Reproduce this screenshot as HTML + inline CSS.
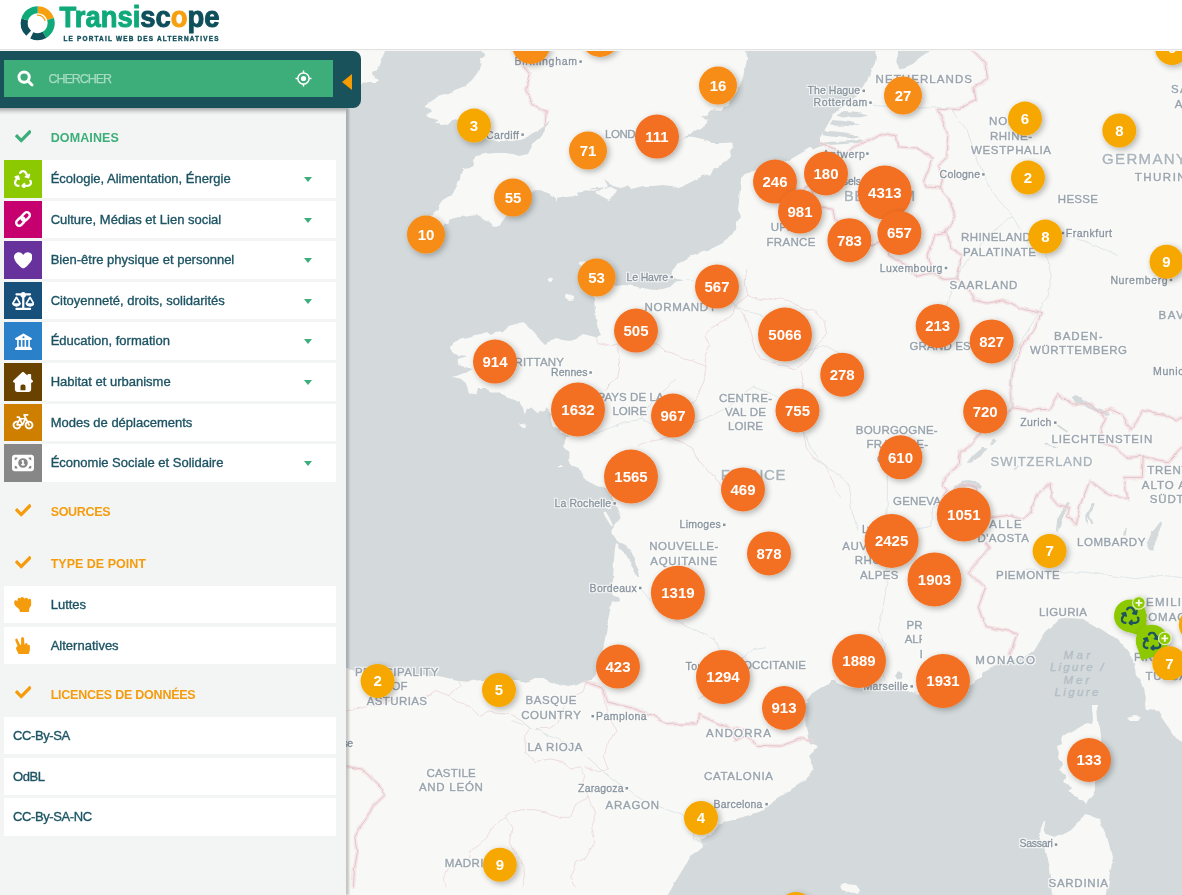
<!DOCTYPE html>
<html lang="fr"><head><meta charset="utf-8"><title>Transiscope - Le portail web des alternatives</title>
<style>
html,body{margin:0;padding:0;width:1182px;height:895px;overflow:hidden;background:#fff;font-family:"Liberation Sans",sans-serif;}
#header{position:absolute;left:0;top:0;width:1182px;height:49px;background:#fff;border-bottom:1px solid #e2e2e2;box-shadow:0 1px 0 #f6f6f5;z-index:5}
#map{position:absolute;left:0;top:50px;width:1182px;height:845px;background:#d4dadc;overflow:hidden}
#map svg{position:absolute;left:0;top:-50px}
#sidebar{position:absolute;left:0;top:50px;width:346px;height:845px;background:#f3f5f5;box-shadow:3px 0 2px rgba(0,0,0,.2);z-index:3}
#search{position:absolute;left:0;top:51px;width:361px;height:57px;background:#19525b;border-radius:0 8px 8px 0;z-index:4}
#search .inp{position:absolute;left:4px;top:9px;width:329px;height:37px;background:#3dae7a}
#search .ph{position:absolute;left:48.5px;top:20.6px;font-size:12.5px;line-height:14px;color:#a7dcc2;letter-spacing:-1.05px;-webkit-text-stroke:.25px #a7dcc2;white-space:nowrap;transform-origin:0 0}
#search .tri{position:absolute;left:342px;top:23px;width:0;height:0;border-right:10px solid #f59c00;border-top:8.3px solid transparent;border-bottom:8.3px solid transparent}
.ic{position:absolute;display:block}
.hd{position:absolute;left:0;width:346px;height:52px}
.hd .t{position:absolute;left:50.7px;top:23.8px;font-size:12.5px;line-height:13px;font-weight:bold;white-space:nowrap}
.it{position:absolute;left:4px;width:332px;height:37.5px;background:#fff}
.it .b{position:absolute;left:0;top:0;width:38px;height:37.5px}
.it .t{position:absolute;left:46.7px;top:11px;font-size:13px;line-height:15px;color:#1d5464;white-space:nowrap;-webkit-text-stroke:.35px #1d5464}
.it .c{position:absolute;left:300.4px;top:17px;width:0;height:0;border-top:5.2px solid #3dae7a;border-left:4.9px solid transparent;border-right:4.9px solid transparent}
.land{fill:#f8f8f6}
.sea{fill:#d4dadc}
.cl text{font-family:"Liberation Sans",sans-serif;font-weight:bold;font-size:15px;fill:#fff;text-anchor:middle}
.lb text{font-family:"Liberation Sans",sans-serif;stroke-width:.45px}
.lb .r{fill:#97a3ad;stroke:#97a3ad}
.lb .c{fill:#a9b4bc;stroke:#a9b4bc}
.lb .t{fill:#84929e;stroke:#84929e;stroke-width:.38px}
.lb .s{fill:#b3bdc5;stroke:#b3bdc5;stroke-width:.3px;font-style:italic}
#sidebar .topsh{position:absolute;left:0;top:58px;width:346px;height:7px;background:linear-gradient(rgba(0,0,0,.3),rgba(0,0,0,.08) 60%,rgba(0,0,0,0))}

</style></head>
<body>
<div id="map"><svg width="1182" height="895" viewBox="0 0 1182 895"><defs><filter id="sh" x="-30%" y="-30%" width="170%" height="170%"><feGaussianBlur in="SourceAlpha" stdDeviation="3.4"/><feOffset dx="1.5" dy="2"/><feComponentTransfer><feFuncA type="linear" slope=".3"/></feComponentTransfer><feMerge><feMergeNode/><feMergeNode in="SourceGraphic"/></feMerge></filter><filter id="halo" x="-5%" y="-5%" width="110%" height="110%"><feMorphology in="SourceAlpha" operator="dilate" radius="1.1" result="d"/><feGaussianBlur in="d" stdDeviation=".5" result="b"/><feFlood flood-color="#fbfbfa" flood-opacity=".9"/><feComposite in2="b" operator="in"/><feMerge><feMergeNode/><feMergeNode in="SourceGraphic"/></feMerge></filter><filter id="wig" x="0" y="0" width="100%" height="100%" filterUnits="userSpaceOnUse"><feTurbulence type="fractalNoise" baseFrequency="0.09" numOctaves="2" seed="3" result="n"/><feDisplacementMap in="SourceGraphic" in2="n" scale="4" xChannelSelector="R" yChannelSelector="G"/></filter><clipPath id="ck"><rect x="880" y="610" width="41.9" height="60"/></clipPath></defs><rect x="0" y="0" width="1182" height="895" class="sea"/><g filter="url(#wig)"><path class="land" d="M340 44 L385 44 L385 50 L380 62 L377 70 L373 72 L375 78 L379 80 L377 83 L367 83 L362 84 L340 86 Z"/><path class="land" d="M480.6 44 L480.6 50 L485 56 L480 59 L480.6 64 L478 72 L472 80 L465 86 L455 90 L447 94.4 L439 96.4 L435 99 L427 103.6 L424.6 107 L430 108.4 L432 111 L427 116 L431 118 L435 119 L439 120.4 L435 122.4 L441 125 L447 124.4 L453 119 L459 120 L467 130 L479 138 L487 138 L499 141 L513 141 L523 138 L531 134 L539 130 L547 124 L551 120 L549 124 L544 132 L539 138 L532 144 L530 150 L528 154 L519 156 L513 154 L505 153 L495 153 L485 154 L477 156 L474 159 L475 164 L471 168 L463 169 L460.6 174 L460 180 L459.2 180 L455.8 188.5 L450.8 195.2 L442.3 200.3 L438.9 205.4 L437.2 210.5 L433 214.7 L425.4 222.3 L418.6 229.1 L410.2 234.1 L407.6 238.4 L413.5 242.6 L422 239.2 L427.1 240.9 L430.5 245.1 L438.9 242.6 L442.3 235.8 L444.8 224.8 L449.1 224.8 L450.8 218.9 L457.5 217.2 L466 216.4 L472.8 215.5 L476.1 213.8 L479.5 216.4 L484.6 220.6 L491.4 222.3 L493.1 225.7 L499.8 225.7 L501.5 222.3 L504.9 218.1 L510 212.1 L515.1 205.4 L518.4 200.3 L525.2 193.5 L532 190.2 L540.4 190.2 L548.9 193.5 L555.7 197.8 L556.5 202.8 L558.2 197.8 L565.8 196.1 L572.6 195.2 L577.7 196.1 L576 191.8 L586.1 190.2 L594.6 191.8 L600 190.2 L583 190 L589 190 L593 188 L599 188 L607 186 L603 179 L607 182 L613 186 L621 188 L627 186 L631 189 L635 188 L643 186 L653 186 L663 185 L671 186 L679 188 L687 184 L695 180 L703 176 L711 174 L714 168 L719 166 L727 162 L731 156 L730 150 L733 146 L732 142.4 L723 143 L710 143 L703 140 L695 138 L683 137.4 L691 134 L695 131 L703 126 L707 123 L709 119 L701 117 L707 114 L711 110 L721 111 L725 107 L727 106 L738 90 L742 80 L745 70 L747 58 L746 50 L746 44 Z"/><path class="land" d="M596 193 L603 188 L611 187 L618 190 L616 194 L609 200 L603 197 Z"/><path class="land" d="M877 44 L877 50 L875 62 L871 72 L867 80 L862 88 L857 96 L851 100 L845 105 L839 110 L833 116 L828 123 L824 130 L821 136 L819 139 L819 144 L813 146 L803 152 L793 158 L783 162 L771 166 L757 170 L745 174 L741 178 L740 190 L739 202 L738 210 L741 216 L737 222 L736 229 L735 229 L732 235 L723 243 L713 248 L703 251 L693 255 L683 260 L677 264 L673 271 L672 277 L677 279 L683 280.6 L675 281.4 L669 287 L663 289 L653 290 L643 288 L633 286 L623 285 L616 286 L612 282 L611 272 L609.5 265.5 L604 264 L596 265 L588 263.5 L581 261.5 L578.5 263 L582 269 L587 278 L591 287 L593.5 295 L595 309 L596 319 L598 329 L601 335 L595 337 L583 334 L577 338 L571 341 L563 340 L557 338 L551 341 L545 345 L540 340 L535 333 L529 327 L525 322 L519 323 L513 325 L507 327 L503 331 L495 332 L491 335 L487 332 L481 334 L475 335 L467 337 L459 339 L453 343 L450 347 L451 353 L459 355 L467 356 L459 359 L458 365 L465 367 L473 369 L463 373 L453 377 L459.8 378.7 L466.6 384.8 L469 392.4 L476.5 393.2 L478 387.9 L485.7 387.9 L490.3 392.4 L497.9 392.4 L504 395.5 L511.6 399.3 L519.2 402.3 L523 407.7 L524.5 414.5 L526.8 407.7 L531.4 407.7 L537.5 413 L545 410.7 L546.6 406.1 L549.6 410.7 L552.7 415.3 L551 421 L553 427 L560 428 L570 428.5 L560 432 L566 435 L571 436.6 L566.4 438.1 L563.3 447.3 L569.4 451.8 L569.4 459.4 L572.5 466 L579 468 L583 476 L589 482 L597 486 L605 488 L609 492 L615 503 L617.5 507.4 L620.2 514.1 L621.6 518.8 L618.9 520.8 L616.2 523.5 L613.8 526.9 L611.5 530.2 L611.5 532.9 L614.2 536.2 L616.9 539.6 L619.5 542 L625.6 545 L630.9 550.3 L633.6 557 L636.3 565.1 L639 573.1 L640.3 577.1 L639 577.1 L635 573.1 L632.3 567.7 L629.6 561 L625.6 554.3 L620.2 549 L617.5 543.6 L615.9 543.6 L614.9 549 L614.2 557 L613.5 570.4 L612.8 583.8 L612.2 594.6 L614.2 595.9 L618.9 597.2 L620.2 599.9 L616.2 601.9 L612.2 601.3 L611.1 604 L610.2 610 L608 620 L605 640 L602 654 L599 666 L595 676 L591 680 L583 682 L577 685 L567 687 L559 685 L551 682 L543 678 L535 678 L527 682 L517 680 L483 680 L471 681 L459 680 L447 678 L439 676 L427 675 L407 675 L395 674 L357 671 L347 669 L340 668 L340 900 L667 900 L668 895 L674 884 L680 874 L686 864 L690 856 L696 852 L703 846 L700 840 L706 837 L714 832 L718 825 L726 822 L736 819 L746 816 L756 813 L764 810 L769 805 L774 800 L782 795 L790 790 L798 785 L804 781 L809 776 L813 770 L812 762 L809 756 L813 752 L817 747 L810 744 L809 736 L807 728 L806 716 L805 720 L806 710 L808 700 L814 692 L822 687 L828 684 L832 680 L840 684 L848 687 L856 688 L866 689 L884 690 L900 689 L910 691 L916 694 L924 698 L936 698 L946 700 L956 696 L968 692 L970 686 L976 680 L982 677 L984 672 L990 669 L998 664 L1012 660 L1026 656 L1034 650 L1040 640 L1044 633 L1052 625 L1060 620 L1070 618 L1082 619 L1086 621 L1094 625 L1104 631 L1114 638 L1122 644 L1127 649 L1131 656 L1134 664 L1136 674 L1141 680 L1144 688 L1146 698 L1145 704 L1146 710 L1152 708 L1158 712 L1162 718 L1166 724 L1172 732 L1176 738 L1182 742 L1190 744 L1190 44 Z"/><path class="land" d="M1092 705 L1092 708 L1093 720 L1092 724 L1086 723 L1080 726 L1074 730 L1066 734 L1061 738 L1062 744 L1057 746 L1059 752 L1058 758 L1062 762 L1063 766 L1059 770 L1066 774 L1066 778 L1064 782 L1070 785 L1072 788 L1068 792 L1074 795 L1078 798 L1084 801 L1086 804 L1088 800 L1092 796 L1095 790 L1095 784 L1096 780 L1101 766 L1101.6 752 L1101 736 L1100 728 L1098 722 L1098 720 L1097 708 L1097 705 Z"/><path class="land" d="M1086 814 L1084 818 L1078 822 L1074 826 L1068 832 L1060 836 L1052 837 L1046 835 L1043.6 830 L1045 824 L1045.2 821 L1043.6 821.6 L1041 828 L1040 834 L1042 840 L1044 846 L1046 852 L1048 860 L1050 868 L1051 876 L1052 886 L1054 900 L1106 900 L1108 888 L1109 880 L1110 872 L1112 864 L1113 856 L1110 848 L1108 840 L1106 832 L1102 827 L1100 820 L1094 816 Z"/><path class="land" d="M1127 718 L1134 716 L1141 717 L1138 721 L1130 721 Z"/><path class="land" d="M547 280 L550 277.5 L553 278.5 L552 281.5 L548 282 Z"/><path class="land" d="M565 294.5 L570 293.5 L575 295 L574.5 299.5 L569 300 L565.5 298 Z"/><path class="land" d="M519 423.5 L523 423 L527 426 L526 428.5 L522 427.5 Z"/><path class="land" d="M558 466 L561 466 L562.5 468 L559 468 Z"/><path class="land" d="M603.5 511.4 L606.1 512.1 L608.8 516.8 L612.2 523.5 L612.8 526.5 L610.8 525.5 L607.5 520.2 L604.1 514.8 Z"/><path class="land" d="M601 505.5 L606 505 L612 508 L607 508.5 Z"/><path class="land" d="M563 445 L566 445 L568 450 L566 450 Z"/><path class="land" d="M840 886 L846 884 L856 885 L860 890 L858 895 L848 892 L842 890 Z"/><path class="sea" d="M897.5 44 L896.4 62.2 L899.5 69.3 L905.6 68.3 L913.7 62.2 L921.8 56.1 L930 52 L932 44 Z"/><path class="sea" d="M843.7 110.9 L852.8 111.5 L860.9 112.5 L868 114.6 L860.9 116.2 L851.8 116.2 L843.7 117.4 L837.6 115.4 Z"/><path class="sea" d="M832.5 120.1 L843.7 121.1 L852.8 122.7 L859.9 124.7 L852.8 126.5 L843.7 125.7 L835.5 125.7 L830.1 124.1 Z"/><path class="sea" d="M822.7 130.2 L832.5 131.2 L843.7 132.2 L852.8 134.3 L859.9 137.3 L850.8 138.7 L840.6 137.3 L830.5 136.5 L822.7 135.3 Z"/><path class="sea" d="M808.1 145.4 L820.3 143 L832.5 141.8 L843.7 141.4 L852.8 141 L860.9 139.3 L863.4 141.2 L854.8 143.2 L843.7 144 L832.5 144.8 L820.3 146.6 L812.2 149.5 Z"/><path class="sea" d="M946.6 499.9 L949.7 492.6 L955.7 486 L962.5 480.7 L969.3 480.1 L978.4 482.7 L982.1 486 L980.7 488.7 L976.1 488 L967 486.7 L960.2 487.3 L954.7 492 L951.1 495.9 L947.5 501.2 Z"/><path class="sea" d="M967.9 462.2 L973.9 454.9 L983 446.9 L987.5 447.5 L980.7 456.2 L972.5 461.5 Z"/><path class="sea" d="M989.8 444.2 L994.3 439.5 L996.6 440.8 L992.1 445.5 Z"/><path class="sea" d="M1071.7 398.5 L1076.3 395.1 L1085.4 400.5 L1096.7 407.3 L1108.1 412 L1110.4 414 L1103.6 415.3 L1094.5 411.3 L1083.1 404.6 L1076.3 403.2 Z"/><path class="sea" d="M1055.8 531.9 L1057.1 520.2 L1060.3 513.6 L1067.2 503.1 L1069.9 503.8 L1063.5 515 L1059.9 526.7 Z"/><path class="sea" d="M1087.2 525.4 L1086.3 515 L1092.6 503.8 L1095.4 503.8 L1089.9 515.6 L1093.6 523.5 L1091.3 524.1 L1088.5 516.9 Z"/><path class="sea" d="M1150.4 549.5 L1146.8 543 L1151.4 533.2 L1160.5 521.5 L1162.3 523.5 L1155.4 539.8 L1154.5 549.5 Z"/><path class="sea" d="M1055.3 423.4 L1059 427.4 L1067.2 432.8 L1068.1 431.5 L1060.3 426.1 L1056.2 422.1 Z"/><path class="sea" d="M1044.4 444.2 L1051.2 447.5 L1058.1 448.9 L1058.1 447.5 L1051.2 445.5 L1045.3 442.8 Z"/><path class="sea" d="M1123.1 534.5 L1124.5 528 L1125.9 528 L1125 534.5 Z"/><path class="sea" d="M894.2 675.8 L897.9 670.7 L903.3 673.9 L901.5 678.9 L896.5 679.5 Z"/><path class="sea" d="M1013.5 468.8 L1018 466.2 L1018.9 467.5 L1014.4 470.1 Z"/><g fill="none" stroke-linejoin="round" stroke-linecap="round"><path d="M782.7 163.3 L785.0 180.7 L798.6 191.5 L810.0 185.0 L816.8 205.8 L832.8 209.4 L835.1 220.1 L855.5 221.5 L857.8 244.2 L869.2 245.6 L880.6 241.4 L886.5 230.0 L888.8 255.5 L907.9 266.1 L915.6 276.6 L931.5 273.1 M931.5 273.1 L928.3 255.5 L935.2 234.3 L945.6 232.2 M945.6 232.2 L951.1 248.5 L962.5 255.5 L956.6 278.7 M931.5 273.1 L944.3 279.4 L956.6 278.7 M956.6 278.7 L967.0 287.1 L973.9 299.7 L987.5 303.1 L1003.4 299.7 L1019.4 308.0 L1041.2 313.5 L1035.3 328.8 L1021.6 346.0 L1012.5 373.3 L1010.3 393.7 L1012.1 407.9 M945.6 232.2 L955.7 216.5 L948.8 198.6 L940.6 187.9 M820.0 143.0 L844.2 154.6 L860.1 143.0 L873.7 138.6 L882.8 133.5 L896.5 135.7 L898.8 148.1 L917.0 148.8 L932.9 158.2 L923.8 180.7 L926.1 187.1 L940.6 187.9 M940.6 187.9 L943.4 175.6 L937.5 166.2 L946.6 157.5 L948.8 137.1 L938.4 109.3 L957.9 109.3 L976.1 100.4 L973.9 87.8 L987.5 78.9 L985.2 63.3 L972.5 49.8 L973.9 44.6 M1012.1 407.9 L1003.4 418.0 L991.2 414.0 L983.0 417.4 L985.2 427.4 L971.6 444.2 L960.2 452.2 L959.3 463.5 L945.6 477.4 L942.9 486.0 L946.6 489.3 L937.9 505.1 L945.6 504.5 L953.4 497.2 L950.6 493.9 L962.5 484.0 L976.1 486.0 L978.4 505.1 L987.1 518.2 M987.1 518.2 L1010.3 515.0 L1023.9 518.9 L1030.7 512.3 L1037.6 493.9 L1050.3 483.4 L1051.2 497.2 L1058.1 505.8 L1069.4 508.4 L1067.2 515.0 L1076.3 524.8 L1079.9 505.8 L1089.9 480.7 L1108.1 493.9 L1127.7 498.5 L1124.0 477.4 L1142.3 477.4 L1143.2 456.2 M1143.2 456.2 L1126.3 457.5 L1116.3 447.5 L1103.6 443.5 L1100.4 429.5 L1105.8 417.4 L1101.7 414.0 M1101.7 414.0 L1089.9 403.9 L1071.7 403.9 L1058.1 393.7 L1049.0 409.3 L1030.7 410.0 L1012.1 407.9 M1101.7 414.0 L1110.4 409.3 L1121.8 415.3 L1130.9 429.5 L1142.3 410.6 L1162.7 414.0 L1176.4 420.7 L1194.6 408.6 M1143.2 456.2 L1155.9 460.8 L1167.3 462.8 L1180.9 448.9 L1194.6 449.5 M987.1 518.2 L977.0 525.4 L989.8 548.2 L968.4 572.1 L985.2 588.2 L978.4 607.4 L985.2 626.5 L1017.1 632.9 L1009.4 656.3 M585.2 682.0 L602.9 688.3 L607.5 702.0 L632.5 708.2 L653.0 715.7 L666.7 724.4 L697.2 723.8 L698.5 714.5 L732.2 729.9 M732.2 729.9 L734.9 740.4 L744.9 736.1 L747.7 731.8 L737.2 726.8 L732.2 729.9 M744.9 736.1 L757.7 745.4 L780.4 746.0 L803.2 738.0 L810.9 740.4 M527.9 40.8 L524.7 53.6 L530.1 59.6 L521.0 63.3 L530.1 74.5 L525.6 89.3 L532.4 104.1 L546.1 111.5 L545.6 124.7 M347.0 766.6 L362.2 769.1 L372.4 779.3 L382.5 789.4 L385.1 794.5 L372.4 807.2 L367.3 817.4 L359.7 827.5 L354.6 837.7 L357.2 852.9 L354.6 868.1 L353.3 886.9" stroke="#f0d9dc" stroke-width="4" opacity=".55"/><path d="M782.7 163.3 L785.0 180.7 L798.6 191.5 L810.0 185.0 L816.8 205.8 L832.8 209.4 L835.1 220.1 L855.5 221.5 L857.8 244.2 L869.2 245.6 L880.6 241.4 L886.5 230.0 L888.8 255.5 L907.9 266.1 L915.6 276.6 L931.5 273.1 M931.5 273.1 L928.3 255.5 L935.2 234.3 L945.6 232.2 M945.6 232.2 L951.1 248.5 L962.5 255.5 L956.6 278.7 M931.5 273.1 L944.3 279.4 L956.6 278.7 M956.6 278.7 L967.0 287.1 L973.9 299.7 L987.5 303.1 L1003.4 299.7 L1019.4 308.0 L1041.2 313.5 L1035.3 328.8 L1021.6 346.0 L1012.5 373.3 L1010.3 393.7 L1012.1 407.9 M945.6 232.2 L955.7 216.5 L948.8 198.6 L940.6 187.9 M820.0 143.0 L844.2 154.6 L860.1 143.0 L873.7 138.6 L882.8 133.5 L896.5 135.7 L898.8 148.1 L917.0 148.8 L932.9 158.2 L923.8 180.7 L926.1 187.1 L940.6 187.9 M940.6 187.9 L943.4 175.6 L937.5 166.2 L946.6 157.5 L948.8 137.1 L938.4 109.3 L957.9 109.3 L976.1 100.4 L973.9 87.8 L987.5 78.9 L985.2 63.3 L972.5 49.8 L973.9 44.6 M1012.1 407.9 L1003.4 418.0 L991.2 414.0 L983.0 417.4 L985.2 427.4 L971.6 444.2 L960.2 452.2 L959.3 463.5 L945.6 477.4 L942.9 486.0 L946.6 489.3 L937.9 505.1 L945.6 504.5 L953.4 497.2 L950.6 493.9 L962.5 484.0 L976.1 486.0 L978.4 505.1 L987.1 518.2 M987.1 518.2 L1010.3 515.0 L1023.9 518.9 L1030.7 512.3 L1037.6 493.9 L1050.3 483.4 L1051.2 497.2 L1058.1 505.8 L1069.4 508.4 L1067.2 515.0 L1076.3 524.8 L1079.9 505.8 L1089.9 480.7 L1108.1 493.9 L1127.7 498.5 L1124.0 477.4 L1142.3 477.4 L1143.2 456.2 M1143.2 456.2 L1126.3 457.5 L1116.3 447.5 L1103.6 443.5 L1100.4 429.5 L1105.8 417.4 L1101.7 414.0 M1101.7 414.0 L1089.9 403.9 L1071.7 403.9 L1058.1 393.7 L1049.0 409.3 L1030.7 410.0 L1012.1 407.9 M1101.7 414.0 L1110.4 409.3 L1121.8 415.3 L1130.9 429.5 L1142.3 410.6 L1162.7 414.0 L1176.4 420.7 L1194.6 408.6 M1143.2 456.2 L1155.9 460.8 L1167.3 462.8 L1180.9 448.9 L1194.6 449.5 M987.1 518.2 L977.0 525.4 L989.8 548.2 L968.4 572.1 L985.2 588.2 L978.4 607.4 L985.2 626.5 L1017.1 632.9 L1009.4 656.3 M585.2 682.0 L602.9 688.3 L607.5 702.0 L632.5 708.2 L653.0 715.7 L666.7 724.4 L697.2 723.8 L698.5 714.5 L732.2 729.9 M732.2 729.9 L734.9 740.4 L744.9 736.1 L747.7 731.8 L737.2 726.8 L732.2 729.9 M744.9 736.1 L757.7 745.4 L780.4 746.0 L803.2 738.0 L810.9 740.4 M527.9 40.8 L524.7 53.6 L530.1 59.6 L521.0 63.3 L530.1 74.5 L525.6 89.3 L532.4 104.1 L546.1 111.5 L545.6 124.7 M347.0 766.6 L362.2 769.1 L372.4 779.3 L382.5 789.4 L385.1 794.5 L372.4 807.2 L367.3 817.4 L359.7 827.5 L354.6 837.7 L357.2 852.9 L354.6 868.1 L353.3 886.9" stroke="#e3c0c7" stroke-width="1" opacity=".9"/><path d="M347.0 710.8 L352.1 709.5 L372.4 705.7 L397.8 698.1 L423.1 698.1 L435.8 690.5 L448.5 695.5 L461.2 685.4 L458.7 680.3 M448.5 695.5 L458.7 703.1 L471.4 708.2 L479.0 715.8 L489.1 710.8 L496.7 713.3 L509.4 714.6 L522.1 720.9 L529.7 728.5 L524.7 736.1 L525.9 753.9 L534.8 761.5 L550.0 759.0 L562.7 761.5 L570.4 769.1 L580.5 766.6 L585.6 776.8 L583.0 786.9 L588.1 797.1 L575.4 804.7 L570.4 817.4 L557.7 817.4 L547.5 812.3 L534.8 809.7 L522.1 809.7 L512.0 812.3 L504.4 817.4 L491.7 827.5 L486.6 837.7 L479.0 845.3 L471.4 850.4 L468.8 860.5 L458.7 863.0 L448.5 868.1 L443.4 878.3 L446.0 886.9 M504.4 817.4 L512.0 827.5 L509.4 842.7 L514.5 852.9 L522.1 860.5 L524.7 873.2 L522.1 886.9 M585.6 682.8 L583.0 693.0 L570.4 698.1 L562.7 710.8 L557.7 723.5 L550.0 728.5 L539.9 728.5 L529.7 728.5 M603.3 698.1 L608.4 715.8 L616.0 731.1 L605.9 743.8 L603.3 756.4 L608.4 769.1 L598.3 771.7 L585.6 766.6 M588.1 797.1 L595.7 812.3 L590.7 827.5 L594.5 842.7 L585.6 858.0 L575.4 863.0 L570.4 875.7 L575.4 886.9 M595.5 336.0 L598.1 343.6 L610.8 346.1 L617.1 343.6 L618.4 353.8 L619.6 366.4 L617.1 379.1 L610.8 384.2 L605.7 389.3 M617.1 344.9 L636.1 346.1 L657.7 343.6 L664.1 351.2 L674.2 353.8 L684.4 358.8 L694.5 361.4 L704.7 366.4 L705.9 376.6 L700.9 386.8 L697.1 396.9 L692.0 402.0 L686.9 412.1 M746.5 270.0 L745.3 282.7 L747.8 295.4 L735.1 305.5 L732.6 315.7 L722.4 320.8 L709.7 328.4 L704.7 336.0 L709.7 346.1 L705.9 356.3 L704.7 366.4 M735.1 305.5 L742.7 313.1 L750.4 333.5 L755.4 351.2 L760.5 358.8 L778.3 363.9 L796.0 369.0 L808.7 358.8 L816.3 346.1 L826.5 333.5 L824.0 320.8 L813.8 310.6 L803.7 308.1 L788.4 300.5 L773.2 297.9 L760.5 300.5 L747.8 295.4 M671.7 437.5 L681.8 442.6 L692.0 447.7 L697.1 457.8 L707.2 470.5 L714.8 475.6 L722.4 488.3 L732.6 496.9 M801.1 371.5 L803.7 384.2 L801.1 402.0 L803.7 432.4 L806.2 447.7 L813.8 457.8 L824.0 462.9 L829.0 473.0 L834.1 485.7 L839.2 496.9 M638.7 445.1 L651.4 440.1 L666.6 437.5 L671.7 437.5" stroke="#ecd9dc" stroke-width=".9"/><path d="M566.5 428.8 L596.1 433.5 L623.4 422.1 L641.6 419.4 L663.0 430.1 L678.0 427.4 L698.1 421.4 L727.2 407.9 L753.1 386.9 L771.3 393.7 L786.4 401.2 L800.9 424.1 L810.5 448.2 L823.7 464.2 L847.8 482.1 L851.9 511.0 L857.8 530.0 M687.1 279.4 L703.1 283.6 L716.7 280.8 L723.5 294.1 L734.9 304.5 L746.3 311.5 L762.2 314.9 L773.6 321.2 L780.4 332.2 L787.7 343.2 L803.2 351.5 L825.9 346.0 L851.9 359.7 M640.7 588.9 L655.3 605.5 L675.8 620.2 L694.9 629.7 L714.4 639.2 L725.8 655.0 L732.2 667.6 L721.3 686.4 L698.5 698.9 M946.6 500.5 L932.9 507.1 L930.6 526.7 L912.4 530.0 L898.8 526.7 L886.5 529.3 L885.1 552.7 L887.4 578.6 L882.8 610.6 L878.3 629.7 L885.1 645.5 L877.4 662.6 L885.1 677.0 L887.4 683.3 M1012.1 407.9 L1010.3 386.9 L1012.5 359.7 L1021.6 340.5 L1035.3 318.4 L1046.7 297.6 L1051.2 276.6 L1046.7 255.5 L1043.0 241.4 L1026.2 241.4 L1012.5 215.8 L994.3 195.1 L983.4 174.2 L974.8 153.2 L967.0 129.8 L948.8 107.8 L935.2 107.8 L907.9 107.8 L876.0 105.6 L855.5 100.4 M511.9 720.7 L534.7 728.7 L555.2 738.6 L577.9 748.4 L593.8 763.8 L612.0 779.1 L626.2 788.2 L643.9 800.4 L666.7 809.5 L682.6 815.5 L691.7 830.6 L694.0 839.7 L706.3 844.5 M1016.2 574.1 L1030.7 568.9 L1058.1 572.1 L1085.4 572.1 L1108.1 575.4 L1135.4 578.6 L1162.7 575.4 L1190.0 578.6 M886.5 529.3 L887.4 493.9 L887.4 460.8 L898.8 447.5 L912.4 434.2 L926.1 427.4 M732.2 667.6 L753.1 648.7 L764.5 646.8 M641.6 419.4 L653.0 400.5 L675.8 380.2 M1043.0 241.4 L1062.6 234.3 L1085.4 241.4 L1117.2 255.5 M1012.5 215.8 L989.8 234.3 L969.3 259.0 L955.7 276.6 L946.6 304.5 L944.3 332.2" stroke="#dde4e8" stroke-width=".9"/></g></g><g class="lb"><text class="s" x="1063.5" y="659" font-size="11.5" textLength="26.5" lengthAdjust="spacing">Mar</text><text class="s" x="1050" y="671.4" font-size="11.5" textLength="53.4" lengthAdjust="spacing">Ligure /</text><text class="s" x="1063.5" y="684" font-size="11.5" textLength="25.5" lengthAdjust="spacing">Mer</text><text class="s" x="1054.5" y="696.4" font-size="11.5" textLength="43.9" lengthAdjust="spacing">Ligure</text></g><g class="lb" filter="url(#halo)"><text class="t" x="514.6" y="65.4" font-size="10.5" textLength="62.4" lengthAdjust="spacing">Birmingham</text><text class="t" x="486" y="138.6" font-size="10.5" textLength="33.0" lengthAdjust="spacing">Cardiff</text><text class="r" x="605" y="137.6" font-size="11.5" textLength="47.0" lengthAdjust="spacing">LONDON</text><text class="t" x="807.5" y="94.3" font-size="10.5" textLength="52.5" lengthAdjust="spacing">The Hague</text><text class="t" x="813.6" y="106" font-size="10.5" textLength="53.7" lengthAdjust="spacing">Rotterdam</text><text class="r" x="875.6" y="83" font-size="11.5" textLength="96.4" lengthAdjust="spacing">NETHERLANDS</text><text class="t" x="822.6" y="158" font-size="10.5" textLength="42.2" lengthAdjust="spacing">Antwerp</text><text class="t" x="822" y="184.5" font-size="10.5" textLength="39.0" lengthAdjust="spacing">Brussels</text><text class="c" x="844" y="201" font-size="14.5" textLength="71.0" lengthAdjust="spacing">BELGIUM</text><text class="t" x="939.6" y="178" font-size="10.5" textLength="40.4" lengthAdjust="spacing">Cologne</text><text class="r" x="989" y="125" font-size="11.5" textLength="44.0" lengthAdjust="spacing">NORTH</text><text class="r" x="990" y="140" font-size="11.5" textLength="42.0" lengthAdjust="spacing">RHINE-</text><text class="r" x="971" y="154.4" font-size="11.5" textLength="80.0" lengthAdjust="spacing">WESTPHALIA</text><text class="c" x="1102" y="164.4" font-size="15" textLength="84.0" lengthAdjust="spacing">GERMANY</text><text class="r" x="1134.7" y="181.2" font-size="11.5" textLength="75.3" lengthAdjust="spacing">THURINGIA</text><text class="r" x="1057.8" y="202.7" font-size="11.5" textLength="40.1" lengthAdjust="spacing">HESSE</text><text class="t" x="1065.7" y="236.6" font-size="10.5" textLength="46.3" lengthAdjust="spacing">Frankfurt</text><text class="r" x="961" y="241.3" font-size="11.5" textLength="74.0" lengthAdjust="spacing">RHINELAND-</text><text class="r" x="963" y="256.3" font-size="11.5" textLength="73.0" lengthAdjust="spacing">PALATINATE</text><text class="t" x="879.8" y="272.4" font-size="10.5" textLength="62.5" lengthAdjust="spacing">Luxembourg</text><text class="r" x="949.5" y="289.2" font-size="11.5" textLength="67.9" lengthAdjust="spacing">SAARLAND</text><text class="t" x="1110.4" y="283.8" font-size="10.5" textLength="57.2" lengthAdjust="spacing">Nuremberg</text><text class="r" x="1158.6" y="318.9" font-size="11.5" textLength="57.4" lengthAdjust="spacing">BAVARIA</text><text class="r" x="1054" y="339.6" font-size="11.5" textLength="48.5" lengthAdjust="spacing">BADEN-</text><text class="r" x="1030" y="354" font-size="11.5" textLength="97.0" lengthAdjust="spacing">WÜRTTEMBERG</text><text class="r" x="909.4" y="350.3" font-size="11.5" textLength="68.6" lengthAdjust="spacing">GRAND EST</text><text class="r" x="770.7" y="230.6" font-size="11.5" textLength="40.3" lengthAdjust="spacing">UPPER</text><text class="r" x="766.4" y="245.6" font-size="11.5" textLength="49.0" lengthAdjust="spacing">FRANCE</text><text class="r" x="1171" y="93" font-size="11.5" textLength="59.0" lengthAdjust="spacing">SAXONY-</text><text class="r" x="1174.7" y="107.8" font-size="11.5" textLength="47.3" lengthAdjust="spacing">ANHALT</text><text class="t" x="1153" y="374.7" font-size="10.5" textLength="37.0" lengthAdjust="spacing">Munich</text><text class="r" x="644.6" y="311.2" font-size="11.5" textLength="71.9" lengthAdjust="spacing">NORMANDY</text><text class="t" x="626.6" y="280.6" font-size="10.5" textLength="41.4" lengthAdjust="spacing">Le Havre</text><text class="r" x="506.5" y="366" font-size="11.5" textLength="57.5" lengthAdjust="spacing">BRITTANY</text><text class="t" x="551" y="375.8" font-size="10.5" textLength="36.4" lengthAdjust="spacing">Rennes</text><text class="r" x="597.5" y="400.8" font-size="11.5" textLength="66.1" lengthAdjust="spacing">PAYS DE LA</text><text class="r" x="612.4" y="415" font-size="11.5" textLength="34.4" lengthAdjust="spacing">LOIRE</text><text class="r" x="719" y="401.5" font-size="11.5" textLength="53.0" lengthAdjust="spacing">CENTRE-</text><text class="r" x="725" y="416" font-size="11.5" textLength="41.0" lengthAdjust="spacing">VAL DE</text><text class="r" x="728" y="430.4" font-size="11.5" textLength="35.0" lengthAdjust="spacing">LOIRE</text><text class="c" x="720.8" y="480" font-size="15" textLength="64.7" lengthAdjust="spacing">FRANCE</text><text class="t" x="554.5" y="507" font-size="10.5" textLength="56.5" lengthAdjust="spacing">La Rochelle</text><text class="t" x="679.6" y="528.4" font-size="10.5" textLength="41.2" lengthAdjust="spacing">Limoges</text><text class="r" x="649.3" y="550.2" font-size="11.5" textLength="69.0" lengthAdjust="spacing">NOUVELLE-</text><text class="r" x="650.3" y="564.5" font-size="11.5" textLength="66.9" lengthAdjust="spacing">AQUITAINE</text><text class="t" x="589.6" y="592.4" font-size="10.5" textLength="47.1" lengthAdjust="spacing">Bordeaux</text><text class="r" x="855.8" y="434" font-size="11.5" textLength="81.9" lengthAdjust="spacing">BOURGOGNE-</text><text class="r" x="866.5" y="448.3" font-size="11.5" textLength="61.5" lengthAdjust="spacing">FRANCHE-</text><text class="r" x="877" y="462.6" font-size="11.5" textLength="41.0" lengthAdjust="spacing">COMTÉ</text><text class="t" x="1020.3" y="425.8" font-size="10.5" textLength="31.1" lengthAdjust="spacing">Zurich</text><text class="r" x="1051.4" y="442.6" font-size="11.5" textLength="100.8" lengthAdjust="spacing">LIECHTENSTEIN</text><text class="c" x="990.6" y="465.8" font-size="13" textLength="101.9" lengthAdjust="spacing">SWITZERLAND</text><text class="r" x="1147.2" y="474.4" font-size="11.5" textLength="68.8" lengthAdjust="spacing">TRENTINO-</text><text class="r" x="1141.8" y="489" font-size="11.5" textLength="80.2" lengthAdjust="spacing">ALTO ADIGE/</text><text class="r" x="1149.7" y="503.4" font-size="11.5" textLength="64.3" lengthAdjust="spacing">SÜDTIROL</text><text class="r" x="893" y="504.8" font-size="11.5" textLength="48.0" lengthAdjust="spacing">GENEVA</text><text class="r" x="981" y="527.7" font-size="11.5" textLength="40.7" lengthAdjust="spacing">VALLE</text><text class="r" x="977.4" y="542" font-size="11.5" textLength="51.5" lengthAdjust="spacing">D&#39;AOSTA</text><text class="r" x="1077" y="546.3" font-size="11.5" textLength="68.4" lengthAdjust="spacing">LOMBARDY</text><text class="r" x="996" y="578.8" font-size="11.5" textLength="63.6" lengthAdjust="spacing">PIEMONTE</text><text class="t" x="861.9" y="533" font-size="10.5" textLength="22.1" lengthAdjust="spacing">Lyon</text><text class="r" x="842.2" y="549.9" font-size="11.5" textLength="73.8" lengthAdjust="spacing">AUVERGNE-</text><text class="r" x="854.7" y="564.2" font-size="11.5" textLength="48.3" lengthAdjust="spacing">RHÔNE-</text><text class="r" x="860" y="578.5" font-size="11.5" textLength="38.4" lengthAdjust="spacing">ALPES</text><text class="r" x="1038.9" y="616.4" font-size="11.5" textLength="48.1" lengthAdjust="spacing">LIGURIA</text><text class="r" x="1146" y="606.4" font-size="11.5" textLength="49.0" lengthAdjust="spacing">EMILIA-</text><text class="r" x="1139" y="620.6" font-size="11.5" textLength="65.0" lengthAdjust="spacing">ROMAGNA</text><g clip-path="url(#ck)"><text class="r" x="906.6" y="628.9" font-size="11.5" textLength="68.0" lengthAdjust="spacing">PROVENCE-</text></g><g clip-path="url(#ck)"><text class="r" x="904.8" y="643.2" font-size="11.5" textLength="72.0" lengthAdjust="spacing">ALPES-CÔTE</text></g><g clip-path="url(#ck)"><text class="r" x="919.8" y="657.5" font-size="11.5" textLength="42.0" lengthAdjust="spacing">D&#39;AZUR</text></g><text class="r" x="975.3" y="664.3" font-size="11.5" textLength="59.6" lengthAdjust="spacing">MONACO</text><text class="t" x="863.5" y="690" font-size="10.5" textLength="44.7" lengthAdjust="spacing">Marseille</text><text class="r" x="1134" y="661" font-size="11.5" textLength="51.0" lengthAdjust="spacing">FIRENZE</text><text class="r" x="1145.6" y="680.3" font-size="11.5" textLength="58.4" lengthAdjust="spacing">TUSCANY</text><text class="r" x="743" y="669" font-size="11.5" textLength="63.0" lengthAdjust="spacing">OCCITANIE</text><text class="t" x="685.4" y="670" font-size="10.5" textLength="45.6" lengthAdjust="spacing">Toulouse</text><text class="r" x="706" y="737.4" font-size="11.5" textLength="65.0" lengthAdjust="spacing">ANDORRA</text><text class="r" x="704" y="780.4" font-size="11.5" textLength="69.0" lengthAdjust="spacing">CATALONIA</text><text class="t" x="713.6" y="808" font-size="10.5" textLength="48.8" lengthAdjust="spacing">Barcelona</text><text class="t" x="1019.5" y="847.4" font-size="10.5" textLength="33.3" lengthAdjust="spacing">Sassari</text><text class="r" x="1048.5" y="886.7" font-size="11.5" textLength="59.5" lengthAdjust="spacing">SARDINIA</text><text class="r" x="354.9" y="675.7" font-size="11.5" textLength="83.5" lengthAdjust="spacing">PRINCIPALITY</text><text class="r" x="391.5" y="689.9" font-size="11.5" textLength="16.0" lengthAdjust="spacing">OF</text><text class="r" x="366.7" y="704.8" font-size="11.5" textLength="60.3" lengthAdjust="spacing">ASTURIAS</text><text class="r" x="525.5" y="704.1" font-size="11.5" textLength="50.8" lengthAdjust="spacing">BASQUE</text><text class="r" x="521.2" y="718.7" font-size="11.5" textLength="59.7" lengthAdjust="spacing">COUNTRY</text><text class="t" x="595.9" y="720" font-size="10.5" textLength="50.8" lengthAdjust="spacing">Pamplona</text><text class="r" x="527.6" y="751.4" font-size="11.5" textLength="54.8" lengthAdjust="spacing">LA RIOJA</text><text class="r" x="426.4" y="776.6" font-size="11.5" textLength="49.3" lengthAdjust="spacing">CASTILE</text><text class="r" x="418.9" y="790.8" font-size="11.5" textLength="64.0" lengthAdjust="spacing">AND LEÓN</text><text class="t" x="578.1" y="791.9" font-size="10.5" textLength="45.5" lengthAdjust="spacing">Zaragoza</text><text class="r" x="605.5" y="809" font-size="11.5" textLength="53.6" lengthAdjust="spacing">ARAGON</text><text class="r" x="444.8" y="866.5" font-size="11.5" textLength="47.2" lengthAdjust="spacing">MADRID</text><text class="t" x="316" y="746.8" font-size="10.5" textLength="37.2" lengthAdjust="spacing">Ourense</text><rect x="579.3" y="60.3" width="2.6" height="2.6" fill="#8593a0"/><rect x="521.3" y="133.3" width="2.6" height="2.6" fill="#8593a0"/><rect x="862.4" y="89.5" width="2.6" height="2.6" fill="#8593a0"/><rect x="869.2" y="101.3" width="2.6" height="2.6" fill="#8593a0"/><rect x="866.1" y="152.3" width="2.6" height="2.6" fill="#8593a0"/><rect x="982.1" y="173.1" width="2.6" height="2.6" fill="#8593a0"/><rect x="1061.7" y="231.7" width="2.6" height="2.6" fill="#8593a0"/><rect x="944.7" y="266.7" width="2.6" height="2.6" fill="#8593a0"/><rect x="1169.7" y="278.7" width="2.6" height="2.6" fill="#8593a0"/><rect x="670.3" y="275.7" width="2.6" height="2.6" fill="#8593a0"/><rect x="589.3" y="371.2" width="2.6" height="2.6" fill="#8593a0"/><rect x="613.3" y="502.1" width="2.6" height="2.6" fill="#8593a0"/><rect x="723.0" y="523.5" width="2.6" height="2.6" fill="#8593a0"/><rect x="639.0" y="586.7" width="2.6" height="2.6" fill="#8593a0"/><rect x="1054.0" y="421.3" width="2.6" height="2.6" fill="#8593a0"/><rect x="910.4" y="685.1" width="2.6" height="2.6" fill="#8593a0"/><rect x="765.3" y="802.9" width="2.6" height="2.6" fill="#8593a0"/><rect x="1054.7" y="843.3" width="2.6" height="2.6" fill="#8593a0"/><rect x="591.4" y="714.9" width="2.6" height="2.6" fill="#8593a0"/><rect x="625.5" y="787.0" width="2.6" height="2.6" fill="#8593a0"/></g><g class="cl"><circle cx="600" cy="38" r="19" fill="#f78c17" filter="url(#sh)"/><text x="600" y="43.4">37</text><circle cx="531" cy="45" r="19" fill="#f78c17" filter="url(#sh)"/><text x="531" y="50.4">42</text><circle cx="1172" cy="48" r="17" fill="#f6a800" filter="url(#sh)"/><text x="1172" y="53.4">6</text><circle cx="718" cy="85.6" r="19" fill="#f78c17" filter="url(#sh)"/><text x="718" y="91.0">16</text><circle cx="903" cy="95.6" r="19" fill="#f78c17" filter="url(#sh)"/><text x="903" y="101.0">27</text><circle cx="1025" cy="118.6" r="17" fill="#f6a800" filter="url(#sh)"/><text x="1025" y="124.0">6</text><circle cx="474" cy="125.6" r="17" fill="#f6a800" filter="url(#sh)"/><text x="474" y="131.0">3</text><circle cx="1119.3" cy="130.5" r="17" fill="#f6a800" filter="url(#sh)"/><text x="1119.3" y="135.9">8</text><circle cx="657" cy="136.6" r="22" fill="#f37021" filter="url(#sh)"/><text x="657" y="142.0">111</text><circle cx="588" cy="150.6" r="19" fill="#f78c17" filter="url(#sh)"/><text x="588" y="156.0">71</text><circle cx="826" cy="173.5" r="22" fill="#f37021" filter="url(#sh)"/><text x="826" y="178.9">180</text><circle cx="1028" cy="177.6" r="17" fill="#f6a800" filter="url(#sh)"/><text x="1028" y="183.0">2</text><circle cx="775" cy="181.6" r="22" fill="#f37021" filter="url(#sh)"/><text x="775" y="187.0">246</text><circle cx="884.8" cy="192.6" r="27" fill="#f37021" filter="url(#sh)"/><text x="884.8" y="198.0">4313</text><circle cx="513" cy="197.6" r="19" fill="#f78c17" filter="url(#sh)"/><text x="513" y="203.0">55</text><circle cx="800" cy="211.6" r="22" fill="#f37021" filter="url(#sh)"/><text x="800" y="217.0">981</text><circle cx="899.4" cy="233" r="22" fill="#f37021" filter="url(#sh)"/><text x="899.4" y="238.4">657</text><circle cx="426" cy="234.6" r="19" fill="#f78c17" filter="url(#sh)"/><text x="426" y="240.0">10</text><circle cx="1045.3" cy="236.6" r="17" fill="#f6a800" filter="url(#sh)"/><text x="1045.3" y="242.0">8</text><circle cx="849.4" cy="240.2" r="22" fill="#f37021" filter="url(#sh)"/><text x="849.4" y="245.6">783</text><circle cx="1166.5" cy="261.7" r="17" fill="#f6a800" filter="url(#sh)"/><text x="1166.5" y="267.1">9</text><circle cx="596.6" cy="277.6" r="19" fill="#f78c17" filter="url(#sh)"/><text x="596.6" y="283.0">53</text><circle cx="717" cy="286.6" r="22" fill="#f37021" filter="url(#sh)"/><text x="717" y="292.0">567</text><circle cx="937.7" cy="326" r="22" fill="#f37021" filter="url(#sh)"/><text x="937.7" y="331.4">213</text><circle cx="636" cy="330.6" r="22" fill="#f37021" filter="url(#sh)"/><text x="636" y="336.0">505</text><circle cx="785" cy="334.6" r="27" fill="#f37021" filter="url(#sh)"/><text x="785" y="340.0">5066</text><circle cx="991.7" cy="341.4" r="22" fill="#f37021" filter="url(#sh)"/><text x="991.7" y="346.8">827</text><circle cx="495" cy="361.6" r="22" fill="#f37021" filter="url(#sh)"/><text x="495" y="367.0">914</text><circle cx="842.2" cy="374.7" r="22" fill="#f37021" filter="url(#sh)"/><text x="842.2" y="380.1">278</text><circle cx="578" cy="409.6" r="27" fill="#f37021" filter="url(#sh)"/><text x="578" y="415.0">1632</text><circle cx="797.5" cy="410.4" r="22" fill="#f37021" filter="url(#sh)"/><text x="797.5" y="415.8">755</text><circle cx="985.2" cy="411.5" r="22" fill="#f37021" filter="url(#sh)"/><text x="985.2" y="416.9">720</text><circle cx="673" cy="415.6" r="22" fill="#f37021" filter="url(#sh)"/><text x="673" y="421.0">967</text><circle cx="900.5" cy="457.3" r="22" fill="#f37021" filter="url(#sh)"/><text x="900.5" y="462.7">610</text><circle cx="631" cy="476.6" r="27" fill="#f37021" filter="url(#sh)"/><text x="631" y="482.0">1565</text><circle cx="743" cy="489.4" r="22" fill="#f37021" filter="url(#sh)"/><text x="743" y="494.8">469</text><circle cx="963.8" cy="514.5" r="27" fill="#f37021" filter="url(#sh)"/><text x="963.8" y="519.9">1051</text><circle cx="891.6" cy="540.9" r="27" fill="#f37021" filter="url(#sh)"/><text x="891.6" y="546.3">2425</text><circle cx="1049.6" cy="551" r="17" fill="#f6a800" filter="url(#sh)"/><text x="1049.6" y="556.4">7</text><circle cx="769" cy="553.4" r="22" fill="#f37021" filter="url(#sh)"/><text x="769" y="558.8">878</text><circle cx="934.5" cy="579.5" r="27" fill="#f37021" filter="url(#sh)"/><text x="934.5" y="584.9">1903</text><circle cx="677.9" cy="592.8" r="27" fill="#f37021" filter="url(#sh)"/><text x="677.9" y="598.2">1319</text><circle cx="1195.8" cy="624.7" r="17" fill="#f6a800" filter="url(#sh)"/><circle cx="859" cy="661" r="27" fill="#f37021" filter="url(#sh)"/><text x="859" y="666.4">1889</text><circle cx="618" cy="666.6" r="22" fill="#f37021" filter="url(#sh)"/><text x="618" y="672.0">423</text><circle cx="723" cy="677" r="27" fill="#f37021" filter="url(#sh)"/><text x="723" y="682.4">1294</text><circle cx="943" cy="681" r="27" fill="#f37021" filter="url(#sh)"/><text x="943" y="686.4">1931</text><circle cx="377.6" cy="681" r="17" fill="#f6a800" filter="url(#sh)"/><text x="377.6" y="686.4">2</text><circle cx="499" cy="690" r="17" fill="#f6a800" filter="url(#sh)"/><text x="499" y="695.4">5</text><circle cx="784" cy="708" r="22" fill="#f37021" filter="url(#sh)"/><text x="784" y="713.4">913</text><circle cx="1089" cy="760" r="22" fill="#f37021" filter="url(#sh)"/><text x="1089" y="765.4">133</text><circle cx="701" cy="818" r="17" fill="#f6a800" filter="url(#sh)"/><text x="701" y="823.4">4</text><circle cx="499.9" cy="864.7" r="17" fill="#f6a800" filter="url(#sh)"/><text x="499.9" y="870.1">9</text><circle cx="796" cy="909" r="17" fill="#f6a800" filter="url(#sh)"/><text x="796" y="914.4">3</text><g filter="url(#sh)"><circle cx="1130.2" cy="615.7" r="16.2" fill="#8dc900"/><path d="M1123.4 630.4 Q1136.0 634.2 1147 638 Q1146.6 625.6 1146.2 613.2 Z" fill="#8dc900"/><svg x="1120.7" y="606.2" width="19" height="19" viewBox="0 0 512 512"><path fill="#1d5560" d="M152.3 60c46.2-80 161.7-80 207.9 0l37.3 64.6 27.7-16c8.4-4.9 18.9-4.2 26.6 1.7s11.1 15.9 8.6 25.3L436.9 223c-3.4 12.8-16.6 20.4-29.4 17l-87.4-23.4c-9.4-2.5-16.3-10.4-17.6-20s3.4-19.1 11.8-23.9l27.7-16-37.3-64.6c-21.6-37.3-75.4-37.3-97 0l-5.3 9.1c-8.8 15.3-28.4 20.5-43.7 11.7S138.2 84.5 147 69.1zm297.4 219.1c15.3-8.8 34.9-3.6 43.7 11.7l5.3 9.1c46.2 80-11.5 180-103.9 180h-74.6v32c0 9.7-5.8 18.5-14.8 22.2s-19.3 1.7-26.2-5.2l-64-64c-9.4-9.4-9.4-24.6 0-33.9l64-64c6.9-6.9 17.2-8.9 26.2-5.2s14.8 12.5 14.8 22.2v32h74.6c43.1 0 70.1-46.7 48.5-84l-5.3-9.1c-8.8-15.3-3.6-34.9 11.7-43.7zM51 235.4l-27.7-16c-8.4-4.9-13.1-14.3-11.8-23.9s8.2-17.5 17.6-20l87.4-23.5c12.8-3.4 26 4.2 29.4 17l23.4 87.4c2.5 9.4-.9 19.3-8.6 25.3s-18.2 6.6-26.6 1.7l-27.7-16L69.1 332c-21.6 37.3 5.4 84 48.5 84h10.6c17.7 0 32 14.3 32 32s-14.3 32-32 32h-10.6c-92.3 0-150-100-103.8-180z"/></svg><circle cx="1138.9" cy="602.9" r="6.3" fill="#8dc900" stroke="#dfeec0" stroke-width="1.2"/><path d="M1135.5 602.9H1142.3000000000002M1138.9 599.5V606.3" stroke="#f4fae6" stroke-width="1.9" fill="none"/></g><g filter="url(#sh)"><circle cx="1152" cy="640.9" r="16.2" fill="#8dc900"/><path d="M1135.8 640.6 Q1138.0 650.4 1141.3 660.2 Q1151.1 657.3 1160.8 654.5 Z" fill="#8dc900"/><svg x="1142.5" y="631.4" width="19" height="19" viewBox="0 0 512 512"><path fill="#1d5560" d="M152.3 60c46.2-80 161.7-80 207.9 0l37.3 64.6 27.7-16c8.4-4.9 18.9-4.2 26.6 1.7s11.1 15.9 8.6 25.3L436.9 223c-3.4 12.8-16.6 20.4-29.4 17l-87.4-23.4c-9.4-2.5-16.3-10.4-17.6-20s3.4-19.1 11.8-23.9l27.7-16-37.3-64.6c-21.6-37.3-75.4-37.3-97 0l-5.3 9.1c-8.8 15.3-28.4 20.5-43.7 11.7S138.2 84.5 147 69.1zm297.4 219.1c15.3-8.8 34.9-3.6 43.7 11.7l5.3 9.1c46.2 80-11.5 180-103.9 180h-74.6v32c0 9.7-5.8 18.5-14.8 22.2s-19.3 1.7-26.2-5.2l-64-64c-9.4-9.4-9.4-24.6 0-33.9l64-64c6.9-6.9 17.2-8.9 26.2-5.2s14.8 12.5 14.8 22.2v32h74.6c43.1 0 70.1-46.7 48.5-84l-5.3-9.1c-8.8-15.3-3.6-34.9 11.7-43.7zM51 235.4l-27.7-16c-8.4-4.9-13.1-14.3-11.8-23.9s8.2-17.5 17.6-20l87.4-23.5c12.8-3.4 26 4.2 29.4 17l23.4 87.4c2.5 9.4-.9 19.3-8.6 25.3s-18.2 6.6-26.6 1.7l-27.7-16L69.1 332c-21.6 37.3 5.4 84 48.5 84h10.6c17.7 0 32 14.3 32 32s-14.3 32-32 32h-10.6c-92.3 0-150-100-103.8-180z"/></svg><circle cx="1164.8" cy="638.4" r="6.3" fill="#8dc900" stroke="#dfeec0" stroke-width="1.2"/><path d="M1161.3999999999999 638.4H1168.2M1164.8 635.0V641.8" stroke="#f4fae6" stroke-width="1.9" fill="none"/></g><circle cx="1169.3" cy="663.2" r="17" fill="#f6a800" filter="url(#sh)"/><text x="1169.3" y="668.6">7</text></g></svg></div>
<div id="header"><svg width="240" height="49" viewBox="0 0 240 49" style="position:absolute;left:0;top:0"><path d="M37.70 9.70 A13.5 13.5 0 0 1 50.54 19.03" fill="none" stroke="#f7a00f" stroke-width="7"/><path d="M50.54 19.03 A13.5 13.5 0 0 1 44.45 34.89" fill="none" stroke="#0fa97a" stroke-width="7"/><path d="M44.45 34.89 A13.5 13.5 0 0 1 31.78 35.33" fill="none" stroke="#0e4f5b" stroke-width="7"/><path d="M28.67 33.23 A13.5 13.5 0 0 1 24.72 19.48" fill="none" stroke="#0e4f5b" stroke-width="7"/><path d="M24.72 19.48 A13.5 13.5 0 0 1 37.70 9.70" fill="none" stroke="#0fa97a" stroke-width="7"/><path d="M37.5 15.2 A8 8 0 0 1 45 20.5" fill="none" stroke="#f7a00f" stroke-width="1.3" stroke-linecap="round"/><text x="59.5" y="27.4" font-family="'Liberation Sans',sans-serif" font-weight="bold" font-size="29.5px" textLength="160" lengthAdjust="spacingAndGlyphs" stroke-width="1" stroke-linejoin="round"><tspan fill="#0fa97a" stroke="#0fa97a">Transi</tspan><tspan fill="#0e4f5b" stroke="#0e4f5b">sc</tspan><tspan fill="#f7a00f" stroke="#f7a00f">o</tspan><tspan fill="#0e4f5b" stroke="#0e4f5b">pe</tspan></text><text x="63.4" y="40.6" font-family="'Liberation Sans',sans-serif" font-weight="bold" font-size="6.4px" fill="#0e4f5b" stroke="#0e4f5b" stroke-width=".35" textLength="155" lengthAdjust="spacing">LE PORTAIL WEB DES ALTERNATIVES</text></svg></div>
<div id="sidebar"><div class="topsh"></div><div class="hd" style="top:58px"><svg class="ic" viewBox="0 0 512 512" width="16.6" height="16.6" style="left:14.6px;top:19.6px"><path fill="#3dae7a" d="M173.898 439.404l-166.4-166.4c-9.997-9.997-9.997-26.206 0-36.204l36.203-36.204c9.997-9.998 26.207-9.998 36.204 0L192 312.69 432.095 72.596c9.997-9.997 26.207-9.997 36.204 0l36.203 36.204c9.997 9.997 9.997 26.206 0 36.204l-294.4 294.401c-9.998 9.997-26.207 9.997-36.204-.001z"/></svg><div class="t" style="color:#3dae7a;letter-spacing:0.11px">DOMAINES</div></div><div class="it" style="top:110px"><div class="b" style="background:#8dc900"><svg class="ic" viewBox="0 0 512 512" width="18" height="18" style="left:10.0px;top:9.8px"><path fill="#fff" d="M152.3 60c46.2-80 161.7-80 207.9 0l37.3 64.6 27.7-16c8.4-4.9 18.9-4.2 26.6 1.7s11.1 15.9 8.6 25.3L436.9 223c-3.4 12.8-16.6 20.4-29.4 17l-87.4-23.4c-9.4-2.5-16.3-10.4-17.6-20s3.4-19.1 11.8-23.9l27.7-16-37.3-64.6c-21.6-37.3-75.4-37.3-97 0l-5.3 9.1c-8.8 15.3-28.4 20.5-43.7 11.7S138.2 84.5 147 69.1zm297.4 219.1c15.3-8.8 34.9-3.6 43.7 11.7l5.3 9.1c46.2 80-11.5 180-103.9 180h-74.6v32c0 9.7-5.8 18.5-14.8 22.2s-19.3 1.7-26.2-5.2l-64-64c-9.4-9.4-9.4-24.6 0-33.9l64-64c6.9-6.9 17.2-8.9 26.2-5.2s14.8 12.5 14.8 22.2v32h74.6c43.1 0 70.1-46.7 48.5-84l-5.3-9.1c-8.8-15.3-3.6-34.9 11.7-43.7zM51 235.4l-27.7-16c-8.4-4.9-13.1-14.3-11.8-23.9s8.2-17.5 17.6-20l87.4-23.5c12.8-3.4 26 4.2 29.4 17l23.4 87.4c2.5 9.4-.9 19.3-8.6 25.3s-18.2 6.6-26.6 1.7l-27.7-16L69.1 332c-21.6 37.3 5.4 84 48.5 84h10.6c17.7 0 32 14.3 32 32s-14.3 32-32 32h-10.6c-92.3 0-150-100-103.8-180z"/></svg></div><div class="t" style="letter-spacing:0px">Écologie, Alimentation, Énergie</div><div class="c"></div></div><div class="it" style="top:150.6px"><div class="b" style="background:#c7006f"><svg class="ic" viewBox="0 0 18 18" width="18" height="18" style="left:10px;top:9.8px"><g transform="rotate(-45 9 9)" fill="none" stroke="#fff" stroke-width="2.4"><rect x="0.6" y="6" width="9.6" height="6" rx="3"/><rect x="7.8" y="6" width="9.6" height="6" rx="3"/></g></svg></div><div class="t" style="letter-spacing:0px">Culture, Médias et Lien social</div><div class="c"></div></div><div class="it" style="top:191.2px"><div class="b" style="background:#67329b"><svg class="ic" viewBox="0 0 512 512" width="18.5" height="18.5" style="left:9.8px;top:9.5px"><path fill="#fff" d="m241 87.1 15 20.7 15-20.7C296 52.5 336.2 32 378.9 32 452.4 32 512 91.6 512 165.1v2.6c0 112.2-139.9 242.5-212.9 298.2-12.4 9.4-27.6 14.1-43.1 14.1s-30.8-4.6-43.1-14.1C139.9 410.2 0 279.9 0 167.7v-2.6C0 91.6 59.6 32 133.1 32 175.8 32 216 52.5 241 87.1"/></svg></div><div class="t" style="letter-spacing:0px">Bien-être physique et personnel</div><div class="c"></div></div><div class="it" style="top:231.8px"><div class="b" style="background:#17507a"><svg class="ic" viewBox="0 0 640 512" width="22.5" height="18" style="left:7.8px;top:9.8px"><path fill="#fff" d="M384 32h128c17.7 0 32 14.3 32 32s-14.3 32-32 32H398.4c-5.2 25.8-22.9 47.1-46.4 57.3V448h160c17.7 0 32 14.3 32 32s-14.3 32-32 32H128c-17.7 0-32-14.3-32-32s14.3-32 32-32h160V153.3c-23.5-10.3-41.2-31.6-46.4-57.3H128c-17.7 0-32-14.3-32-32s14.3-32 32-32h128c14.6-19.4 37.8-32 64-32s49.4 12.6 64 32m55.6 288h144.8L512 195.8zm72.4 96c-62.9 0-115.2-34-126-78.9-2.6-11 1-22.3 6.7-32.1l95.2-163.2c5-8.6 14.2-13.8 24.1-13.8s19.1 5.3 24.1 13.8L631.3 305c5.7 9.8 9.3 21.1 6.7 32.1-10.8 44.8-63.1 78.9-126 78.9M126.8 195.8 54.4 320h144.9zM.9 337.1c-2.6-11 1-22.3 6.7-32.1l95.2-163.2c5-8.6 14.2-13.8 24.1-13.8s19.1 5.3 24.1 13.8L246.2 305c5.7 9.8 9.3 21.1 6.7 32.1-10.8 44.8-63.1 78.9-126 78.9S11.7 382 .9 337.1"/></svg></div><div class="t" style="letter-spacing:0px">Citoyenneté, droits, solidarités</div><div class="c"></div></div><div class="it" style="top:272.4px"><div class="b" style="background:#2a80c9"><svg class="ic" viewBox="0 0 512 512" width="17" height="17" style="left:10.5px;top:10.2px"><path fill="#fff" d="M271.9 20.2c-9.8-5.6-21.9-5.6-31.8 0l-224 128c-12.6 7.2-18.8 22-15.1 36S17.5 208 32 208h32v208l-51.2 38.4C4.7 460.4 0 469.9 0 480c0 17.7 14.3 32 32 32h448c17.7 0 32-14.3 32-32 0-10.1-4.7-19.6-12.8-25.6L448 416V208h32c14.5 0 27.2-9.8 30.9-23.8s-2.5-28.8-15.1-36l-224-128zM400 208v208h-64V208zm-112 0v208h-64V208zm-112 0v208h-64V208zm80-112a32 32 0 1 1 0 64 32 32 0 1 1 0-64"/></svg></div><div class="t" style="letter-spacing:0px">Éducation, formation</div><div class="c"></div></div><div class="it" style="top:313.0px"><div class="b" style="background:#6a4200"><svg class="ic" viewBox="0 0 512 512" width="20" height="20" style="left:9.0px;top:8.8px"><path fill="#fff" d="M234.2 8.6c12.3-11.4 31.3-11.4 43.5 0L368 92.3V80c0-17.7 14.3-32 32-32h32c17.7 0 32 14.3 32 32v101.5l37.8 35.1c9.6 9 12.8 22.9 8 35.1S493.2 272 480 272h-16v176c0 35.3-28.7 64-64 64H112c-35.3 0-64-28.7-64-64V272H32c-13.2 0-25-8.1-29.8-20.3s-1.6-26.2 8-35.1zM240 320c-26.5 0-48 21.5-48 48v96h128v-96c0-26.5-21.5-48-48-48z"/></svg></div><div class="t" style="letter-spacing:0px">Habitat et urbanisme</div><div class="c"></div></div><div class="it" style="top:353.6px"><div class="b" style="background:#cf7f00"><svg class="ic" viewBox="0 0 640 512" width="22" height="17.6" style="left:8.0px;top:9.9px"><path fill="#fff" d="M331.7 43.3c4.3-7 12-11.3 20.3-11.3h104c13.3 0 24 10.7 24 24s-10.7 24-24 24h-65.6l72.2 148.4c10.7-2.9 21.9-4.4 33.4-4.4 70.7 0 128 57.3 128 128s-57.3 128-128 128-128-57.3-128-128c0-42 20.2-79.2 51.4-102.6L399 207.5l-73.5 147c-2.3 4.8-6.3 8.8-11.4 11.2-.6.3-1.2.5-1.8.7-2.9 1.1-5.9 1.6-8.9 1.5l-32.4.1c-7.9 63.1-61.7 112-127 112-70.7 0-128-57.3-128-128s57.3-128 128-128c10.8 0 21.2 1.3 31.2 3.8l28.5-56.9-11.5-26.9H152c-13.3 0-24-10.7-24-24s10.7-24 24-24h56c9.6 0 18.3 5.7 22.1 14.5l14.3 33.5h123.7l-37.7-77.5c-3.6-7.4-3.2-16.2 1.2-23.2zM228.5 228.7 182.9 320h84.8l-39.1-91.3zm77.2 58.3 47.5-95H265zm168.7 75.5-29.7-61c-12.8 13-20.7 30.8-20.7 50.5 0 39.8 32.2 72 72 72s72-32.2 72-72-32.2-72-72-72c-2.7 0-5.5.2-8.1.5l29.7 61c5.8 11.9.8 26.3-11.1 32.1s-26.3.8-32.1-11.1M149.2 368c-20.2 0-33.4-21.3-24.3-39.4l24.2-48.5c-1.7-.1-3.4-.2-5.1-.2-39.8 0-72 32.2-72 72s32.2 72 72 72c34.3 0 62.9-23.9 70.2-56h-65z"/></svg></div><div class="t" style="letter-spacing:0px">Modes de déplacements</div></div><div class="it" style="top:394.2px"><div class="b" style="background:#878787"><svg class="ic" viewBox="0 0 512 512" width="22" height="22" style="left:8.0px;top:7.8px"><path fill="#fff" d="M64 64C28.7 64 0 92.7 0 128v256c0 35.3 28.7 64 64 64h384c35.3 0 64-28.7 64-64V128c0-35.3-28.7-64-64-64zm192 80a112 112 0 1 1 0 224 112 112 0 1 1 0-224M64 184v-48c0-4.4 3.6-8 8-8h48c4.4 0 8.1 3.6 7.5 8-3.6 29-26.6 51.9-55.5 55.5-4.4.5-8-3.1-8-7.5m0 144c0-4.4 3.6-8.1 8-7.5 29 3.6 51.9 26.6 55.5 55.5.5 4.4-3.1 8-7.5 8H72c-4.4 0-8-3.6-8-8zm376-136.5c-29-3.6-51.9-26.6-55.5-55.5-.5-4.4 3.1-8 7.5-8h48c4.4 0 8 3.6 8 8v48c0 4.4-3.6 8.1-8 7.5m8 136.5v48c0 4.4-3.6 8-8 8h-48c-4.4 0-8.1-3.6-7.5-8 3.6-29 26.6-51.9 55.5-55.5 4.4-.5 8 3.1 8 7.5M240 188c-11 0-20 9-20 20 0 9.7 6.9 17.7 16 19.6V276h-4c-11 0-20 9-20 20s9 20 20 20h48c11 0 20-9 20-20s-9-20-20-20h-4v-68c0-11-9-20-20-20z"/></svg></div><div class="t" style="letter-spacing:0px">Économie Sociale et Solidaire</div><div class="c"></div></div><div class="hd" style="top:432.5px"><svg class="ic" viewBox="0 0 512 512" width="16.6" height="16.6" style="left:14.6px;top:19.6px"><path fill="#f59c0d" d="M173.898 439.404l-166.4-166.4c-9.997-9.997-9.997-26.206 0-36.204l36.203-36.204c9.997-9.998 26.207-9.998 36.204 0L192 312.69 432.095 72.596c9.997-9.997 26.207-9.997 36.204 0l36.203 36.204c9.997 9.997 9.997 26.206 0 36.204l-294.4 294.401c-9.998 9.997-26.207 9.997-36.204-.001z"/></svg><div class="t" style="color:#f59c0d;letter-spacing:-0.33px">SOURCES</div></div><div class="hd" style="top:484.5px"><svg class="ic" viewBox="0 0 512 512" width="16.6" height="16.6" style="left:14.6px;top:19.6px"><path fill="#f59c0d" d="M173.898 439.404l-166.4-166.4c-9.997-9.997-9.997-26.206 0-36.204l36.203-36.204c9.997-9.998 26.207-9.998 36.204 0L192 312.69 432.095 72.596c9.997-9.997 26.207-9.997 36.204 0l36.203 36.204c9.997 9.997 9.997 26.206 0 36.204l-294.4 294.401c-9.998 9.997-26.207 9.997-36.204-.001z"/></svg><div class="t" style="color:#f59c0d;letter-spacing:0px">TYPE DE POINT</div></div><div class="it" style="top:535.8px"><div class="t" style="letter-spacing:0px">Luttes</div></div><div class="it" style="top:576.6px"><div class="t" style="letter-spacing:0px">Alternatives</div></div><div class="hd" style="top:614.8px"><svg class="ic" viewBox="0 0 512 512" width="16.6" height="16.6" style="left:14.6px;top:19.6px"><path fill="#f59c0d" d="M173.898 439.404l-166.4-166.4c-9.997-9.997-9.997-26.206 0-36.204l36.203-36.204c9.997-9.998 26.207-9.998 36.204 0L192 312.69 432.095 72.596c9.997-9.997 26.207-9.997 36.204 0l36.203 36.204c9.997 9.997 9.997 26.206 0 36.204l-294.4 294.401c-9.998 9.997-26.207 9.997-36.204-.001z"/></svg><div class="t" style="color:#f59c0d;letter-spacing:-0.24px">LICENCES DE DONNÉES</div></div><div class="it" style="top:666.9px"><div class="t" style="left:9px;letter-spacing:-0.4px">CC-By-SA</div></div><div class="it" style="top:707.5px"><div class="t" style="left:9px;letter-spacing:-0.4px">OdBL</div></div><div class="it" style="top:748.1px"><div class="t" style="left:9px;letter-spacing:-0.4px">CC-By-SA-NC</div></div><svg class="ic" viewBox="0 0 398 895" width="32" height="72" style="left:8px;top:540px"><path fill="#f59c0d" d="M150 272 L260 272 L265 230 L288 190 L288 130 Q288 110 270 110 Q255 110 250 120 L248 110 Q240 95 225 95 Q210 95 205 108 Q195 88 178 88 Q160 88 155 105 Q145 95 130 98 Q118 105 118 125 L118 140 Q100 125 85 130 Q72 140 78 170 Q82 190 100 205 L140 240 Z"/><path fill="#f59c0d" d="M130 795 L258 795 L272 750 L272 695 Q270 678 255 680 Q245 682 243 692 L243 675 Q240 660 225 660 Q212 662 210 675 L205 680 L200 605 Q198 585 180 585 Q163 587 163 605 L163 680 L150 680 L120 615 Q112 598 98 605 Q85 612 92 630 L120 700 Q100 705 100 725 Q100 745 115 760 Z"/></svg></div>
<div id="search"><div class="inp"></div><svg class="ic" viewBox="0 0 512 512" width="15" height="15" style="left:17.5px;top:20px;overflow:visible" stroke="#fff" stroke-width="36"><path fill="#fff" d="M416 208c0 45.9-14.9 88.3-40 122.7l126.6 126.7c12.5 12.5 12.5 32.8 0 45.3s-32.8 12.5-45.3 0L330.7 376c-34.4 25.1-76.8 40-122.7 40C93.1 416 0 322.9 0 208S93.1 0 208 0s208 93.1 208 208M208 352a144 144 0 1 0 0-288 144 144 0 1 0 0 288"/></svg><div class="ph">CHERCHER</div><svg class="ic" style="left:294px;top:18px" width="19" height="19" viewBox="0 0 19 19"><circle cx="9.5" cy="9.5" r="5.6" fill="none" stroke="#fff" stroke-width="1.5"/><circle cx="9.5" cy="9.5" r="2.6" fill="#fff"/><path d="M9.5 1.5V4M9.5 15V17.5M1.5 9.5H4M15 9.5H17.5" stroke="#fff" stroke-width="1.5"/></svg><div class="tri"></div></div>
</body></html>
